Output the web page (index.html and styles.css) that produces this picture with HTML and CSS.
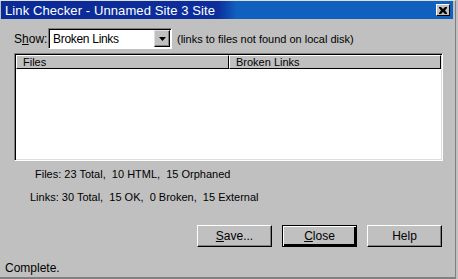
FILE: index.html
```html
<!DOCTYPE html>
<html lang="en">
<head>
    <meta charset="UTF-8">
    <title>Link Checker</title>
    <link rel="stylesheet" href="styles.css">
</head>
<body>
    <div class="window">
        <div class="titlebar">
            <span class="title">Link Checker - Unnamed Site 3 Site</span>
            <span class="close-btn">
                <svg viewBox="0 0 8 7" width="8" height="7">
                    <path d="M0 0h2l2 2 2-2h2v1l-2 2.5 2 2.5v1h-2l-2-2-2 2h-2v-1l2-2.5-2-2.5z" fill="#000"></path>
                </svg>
            </span>
        </div>

        <div class="content">
            <div class="show-row">
                <span class="label">S<u>h</u>ow:</span>
                <div class="combo">
                    <span class="combo-text">Broken Links</span>
                    <span class="combo-btn">
                        <svg viewBox="0 0 7 4" width="7" height="4"><path d="M0 0h7l-3.5 4z" fill="#000"></path></svg>
                    </span>
                </div>
                <span class="hint">(links to files not found on local disk)</span>
            </div>

            <div class="list">
                <div class="list-header">
                    <div class="col col-files">Files</div>
                    <div class="col col-broken">Broken Links</div>
                </div>
                <div class="list-body"></div>
            </div>

            <div class="stats">
                <p class="stat-files">Files: 23 Total,&nbsp; 10 HTML,&nbsp; 15 Orphaned</p>
                <p class="stat-links">Links: 30 Total,&nbsp; 15 OK,&nbsp; 0 Broken,&nbsp; 15 External</p>
            </div>

            <div class="buttons">
                <button class="btn"><u>S</u>ave...</button>
                <button class="btn btn-default"><u>C</u>lose</button>
                <button class="btn">Help</button>
            </div>
        </div>

        <div class="status">Complete.</div>
    </div>
</body>
</html>
```

FILE: styles.css
```css
* {
    margin: 0;
    padding: 0;
    box-sizing: border-box;
}

body {
    font-family: "Liberation Sans", Arial, sans-serif;
    font-size: 11px;
    color: #000;
    background: #c0c0c0;
    width: 458px;
    height: 279px;
    overflow: hidden;
}

.window {
    width: 456px;
    height: 279px;
    background: #c0c0c0;
    border-top: 1px solid #dfdfdf;
    border-right: 1px solid #808080;
    border-bottom: 2px solid #808080;
    display: flex;
    flex-direction: column;
}

.titlebar {
    height: 18px;
    margin: 0 2px 0 1px;
    background: linear-gradient(to right, #0a2a96 0%, #0c2e9c 48%, #1060c0 52%, #1060c0 100%);
    color: #fff;
    display: flex;
    align-items: center;
    justify-content: space-between;
    padding: 0 3px 0 4px;
}

.title {
    font-size: 13px;
    letter-spacing: 0.1px;
}

.close-btn {
    width: 14px;
    height: 12px;
    background: #c0c0c0;
    border-top: 1px solid #fff;
    border-left: 1px solid #fff;
    border-right: 1px solid #000;
    border-bottom: 1px solid #000;
    display: flex;
    align-items: center;
    justify-content: center;
}

.content {
    flex: 1;
    padding: 9px 13px 0 14px;
}

.show-row {
    display: flex;
    align-items: center;
    height: 21px;
}

.label {
    font-size: 12px;
    width: 34px;
}

.combo {
    width: 124px;
    height: 21px;
    background: #fff;
    border-top: 1px solid #808080;
    border-left: 1px solid #808080;
    border-right: 1px solid #fff;
    border-bottom: 1px solid #fff;
    box-shadow: inset 1px 1px 0 #000;
    display: flex;
    align-items: center;
    justify-content: space-between;
    padding: 0 1px 0 4px;
}

.combo-text {
    font-size: 12px;
    letter-spacing: -0.3px;
}

.combo-btn {
    width: 16px;
    height: 17px;
    background: #c0c0c0;
    border-top: 1px solid #dfdfdf;
    border-left: 1px solid #dfdfdf;
    border-right: 1px solid #000;
    border-bottom: 1px solid #000;
    box-shadow: inset -1px -1px 0 #808080;
    display: flex;
    align-items: center;
    justify-content: center;
}

.hint {
    font-size: 11px;
    margin-left: 5px;
}

.list {
    margin-top: 4px;
    width: 429px;
    height: 108px;
    background: #fff;
    border-top: 1px solid #808080;
    border-left: 1px solid #808080;
    border-right: 1px solid #fff;
    border-bottom: 1px solid #fff;
    box-shadow: inset 1px 1px 0 #000, inset -1px -1px 0 #dfdfdf;
    padding: 1px;
    display: flex;
    flex-direction: column;
}

.list-header {
    display: flex;
    height: 14px;
}

.col {
    background: #c0c0c0;
    border-top: 1px solid #fff;
    border-left: 1px solid #fff;
    border-right: 1px solid #000;
    border-bottom: 1px solid #000;
    font-size: 11px;
    line-height: 12px;
    padding-left: 6px;
}

.col-files {
    width: 213px;
}

.col-broken {
    flex: 1;
}

.list-body {
    flex: 1;
}

.stats {
    padding-top: 2px;
    line-height: 23px;
    font-size: 11px;
}

.stat-files {
    padding-left: 21px;
}

.stat-links {
    padding-left: 16px;
}

.buttons {
    display: flex;
    justify-content: flex-end;
    gap: 10px;
    margin-top: 16px;
}

.btn {
    width: 75px;
    height: 22px;
    font-family: "Liberation Sans", Arial, sans-serif;
    font-size: 12px;
    background: #c0c0c0;
    border-top: 1px solid #fff;
    border-left: 1px solid #fff;
    border-right: 1px solid #000;
    border-bottom: 1px solid #000;
    box-shadow: inset -1px -1px 0 #808080;
    color: #000;
}

.btn-default {
    border: 1px solid #000;
    box-shadow: inset 1px 1px 0 #fff, inset -2px -2px 0 #000, inset -1px -1px 0 #808080;
}

.status {
    height: 20px;
    padding: 4px 0 0 5px;
    font-size: 12px;
}
```
